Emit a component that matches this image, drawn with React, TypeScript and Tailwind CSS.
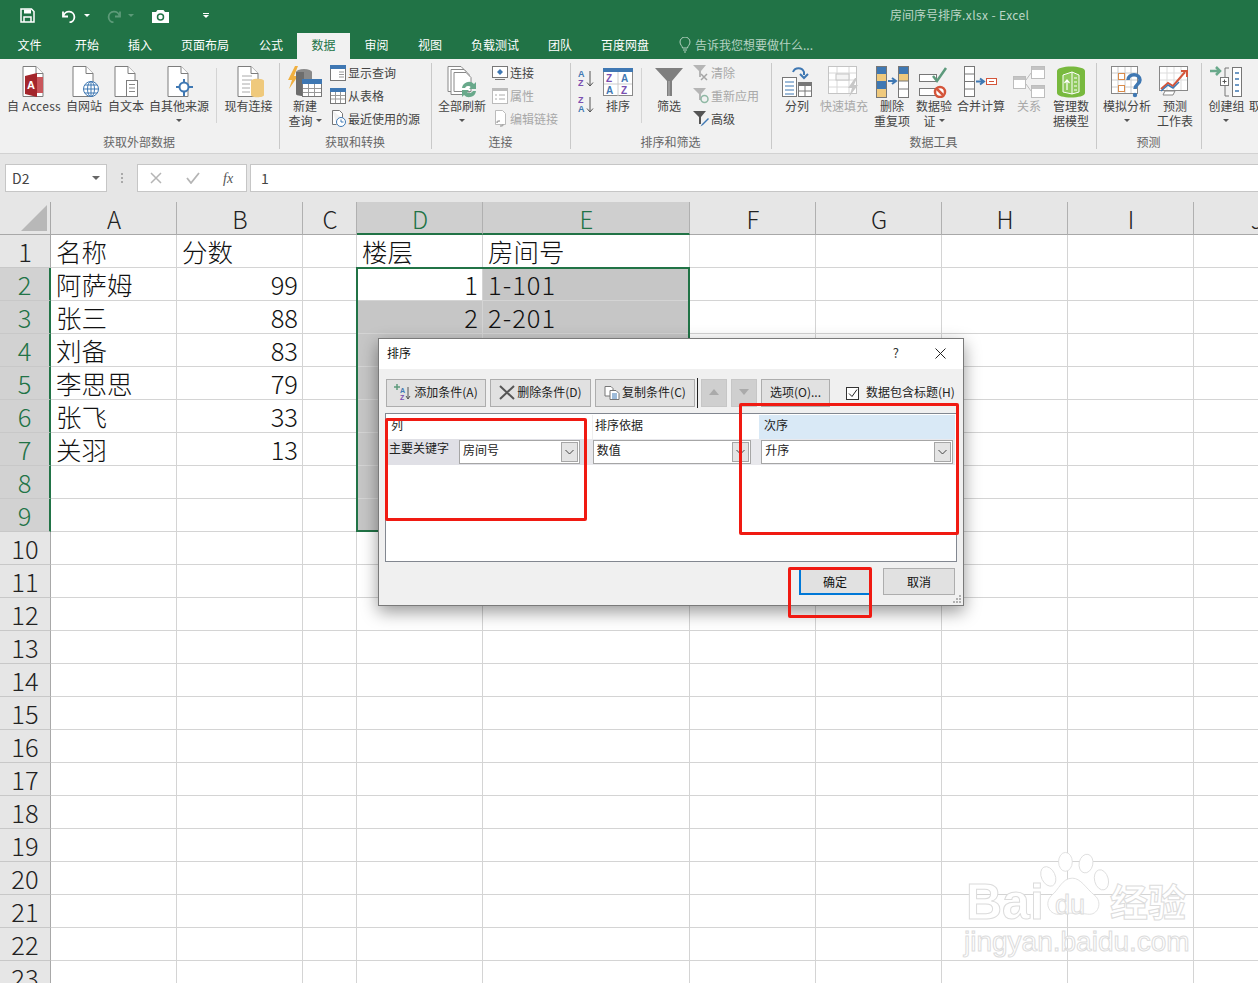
import React from "react";

const Doc = ({ children }: { children?: React.ReactNode }) => (
  <svg width="34" height="32" viewBox="0 0 34 32" fill="none">
    <path d="M6 .5h13l7 7v23H6z" fill="#fff" stroke="#7d7d7d" />
    <path d="M19 .5v7h7" fill="#fff" stroke="#7d7d7d" />
    {children}
  </svg>
);

const Ic = ({ w = 34, h = 32, children }: { w?: number; h?: number; children: React.ReactNode }) => (
  <svg width={w} height={h} viewBox={`0 0 ${w} ${h}`} fill="none">
    {children}
  </svg>
);

const Tri = () => <span className="inline-block w-0 h-0 border-x-[3px] border-x-transparent border-t-[3px] border-t-[#555]" />;

function Big({ w, icon, lines, gray, arrow }: { w: string; icon: React.ReactNode; lines: React.ReactNode[]; gray?: boolean; arrow?: boolean }) {
  return (
    <div className={`${w} shrink-0 flex flex-col items-center`}>
      <div className="h-[32px] mt-[7px] flex items-center justify-center">{icon}</div>
      <div className={`text-[12px] leading-[15px] text-center whitespace-nowrap ${gray ? "text-[#a8a8a8]" : "text-[#444]"}`}>
        {lines.map((l, i) => (
          <div key={i} className="h-[15px] flex items-center justify-center gap-[3px]">
            {l}
          </div>
        ))}
        {arrow && lines.length === 1 && (
          <div className="h-[15px] flex items-center justify-center">
            <Tri />
          </div>
        )}
      </div>
    </div>
  );
}

function Small({ icon, text, gray }: { icon: React.ReactNode; text: string; gray?: boolean }) {
  return (
    <div className="h-[23px] flex items-center gap-[2px] whitespace-nowrap">
      <div className="w-[17px] h-[18px] flex items-center justify-center">{icon}</div>
      <span className={`text-[12px] ${gray ? "text-[#a8a8a8]" : "text-[#444]"}`}>{text}</span>
    </div>
  );
}

function Group({ w, label, children }: { w: string; label: string; children: React.ReactNode }) {
  return (
    <div className={`${w} shrink-0 flex flex-col`}>
      <div className="h-[75px] flex">{children}</div>
      <div className="h-[16px] leading-[16px] text-center text-[12px] text-[#666] pr-px">{label}</div>
    </div>
  );
}

const Sep = () => <div className="w-px h-[86px] mt-[4px] bg-[#c9c9c9] shrink-0" />;
const SubSep = () => <div className="w-px h-[55px] mt-[9px] bg-[#d4d4d4] shrink-0" />;

const smallTable = (
  <svg width="16" height="16" viewBox="0 0 16 16" fill="none">
    <rect x=".5" y=".5" width="15" height="15" fill="#fff" stroke="#777" />
    <rect x="0" y="0" width="16" height="4" fill="#3f78b3" />
    <path d="M1 7.500h14M1 11h14M5.500 4v11M10.500 4v11" stroke="#999" />
  </svg>
);

function AzIcon({ flip }: { flip?: boolean }) {
  return (
    <svg width="17" height="20" viewBox="0 0 17 20" fill="none">
      <text x="0" y="8" fontSize="9" fontWeight="700" fill={flip ? "#7a4fb0" : "#3f78b3"} fontFamily="Liberation Sans, sans-serif">{flip ? "Z" : "A"}</text>
      <text x="0" y="17" fontSize="9" fontWeight="700" fill={flip ? "#3f78b3" : "#7a4fb0"} fontFamily="Liberation Sans, sans-serif">{flip ? "A" : "Z"}</text>
      <path d="M12 2v15M9 13.500l3 3.500 3-3.500" stroke="#555" />
    </svg>
  );
}

function Ribbon() {
  return (
    <div className="h-[95px] bg-[#f1f1f1] border-b border-[#d2d2d2] flex overflow-hidden">
      <Group w="w-[279px]" label="获取外部数据">
        <div className="flex pl-[5px]">
          <Big w="w-[58px]" lines={[<span className="tracking-[0.3px]">自 Access</span>]} icon={
            <Doc>
              <path d="M8 10l12-3v24l-12-3z" fill="#a4262c" />
              <path d="M20 11h6v16h-6z" fill="#c9565b" />
              <text x="10" y="23" fontSize="11" fontWeight="700" fill="#fff" fontFamily="Liberation Sans, sans-serif">A</text>
            </Doc>
          } />
          <Big w="w-[42px]" lines={["自网站"]} icon={
            <Doc>
              <circle cx="24" cy="23" r="7.500" fill="#fff" stroke="#3f78b3" />
              <path d="M16.500 23h15M24 15.500v15M18 19h12M18 27h12" stroke="#3f78b3" />
              <ellipse cx="24" cy="23" rx="3.500" ry="7.500" stroke="#3f78b3" />
            </Doc>
          } />
          <Big w="w-[42px]" lines={["自文本"]} icon={
            <Doc>
              <rect x="17.500" y="14.500" width="11" height="16" fill="#fff" stroke="#7d7d7d" />
              <path d="M20 18.500h6M20 22h6M20 25.500h6" stroke="#888" />
            </Doc>
          } />
          <Big w="w-[64px]" lines={["自其他来源"]} arrow icon={
            <Doc>
              <circle cx="22" cy="21" r="4.500" fill="#fff" stroke="#3f78b3" strokeWidth="2" />
              <path d="M22 13v4M22 25v5M14 21h4M26 21h5" stroke="#3f78b3" strokeWidth="2" />
            </Doc>
          } />
          <div className="ml-[5px]"><SubSep /></div>
          <div className="ml-[3px]">
            <Big w="w-[57px]" lines={["现有连接"]} icon={
              <Doc>
                <path d="M10 10h10M10 14h10M10 18h8M10 22h8M10 26h8" stroke="#aaa" />
                <path d="M19 15c0-3 13-3 13 0v14c0 3-13 3-13 0z" fill="#efc97c" />
              </Doc>
            } />
          </div>
        </div>
      </Group>
      <Sep />
      <Group w="w-[151px]" label="获取和转换">
        <div className="flex pl-px">
          <Big w="w-[48px]" lines={["新建", <>查询<Tri /></>]} icon={
            <Ic w={36} h={32}>
              <path d="M8 0L1 14h4l-3 9 9-13H7l4-10z" fill="#f0b040" />
              <ellipse cx="17" cy="6" rx="8" ry="3" fill="#8a8a8a" />
              <path d="M9 6v22c0 2 8 2 8 2V6z" fill="#6d6d6d" />
              <path d="M17 6h8v8h-8z" fill="#8a8a8a" />
              <rect x="15.500" y="13.500" width="19" height="17" fill="#fff" stroke="#777" />
              <rect x="15" y="13" width="20" height="5" fill="#3f78b3" />
              <path d="M16 22.500h18M16 26.500h18M21.500 18v12M27.500 18v12" stroke="#999" />
            </Ic>
          } />
          <div className="pt-[2px]">
            <Small text="显示查询" icon={
              <svg width="16" height="16" viewBox="0 0 16 16" fill="none">
                <rect x=".5" y=".5" width="15" height="15" fill="#fff" stroke="#777" />
                <rect width="16" height="4" fill="#3f78b3" />
                <path d="M9 7h5M9 9.500h5M9 12h5" stroke="#999" />
              </svg>
            } />
            <Small text="从表格" icon={smallTable} />
            <Small text="最近使用的源" icon={
              <svg width="16" height="17" viewBox="0 0 16 17" fill="none">
                <path d="M2.500.5h7l3 3v5M2.500.5v14h4" stroke="#777" fill="#fff" />
                <circle cx="11" cy="12" r="4.500" fill="#fff" stroke="#3f78b3" />
                <path d="M11 9.500V12h2.500" stroke="#3f78b3" />
              </svg>
            } />
          </div>
        </div>
      </Group>
      <Sep />
      <Group w="w-[138px]" label="连接">
        <div className="flex pl-[3px]">
          <Big w="w-[54px]" lines={["全部刷新"]} arrow icon={
            <Ic w={32} h={32}>
              <path d="M2 .5h13l5 5v20H2z" fill="#fff" stroke="#888" />
              <path d="M5 3.500h13l5 5v20H5z" fill="#fff" stroke="#888" />
              <path d="M8 6.500h12l5 5v14H8z" fill="#fff" stroke="#888" />
              <path d="M16 22a7 7 0 0 1 12-4l2-2v7h-7l2-2a4 4 0 0 0-6 1z" fill="#69a98b" />
              <path d="M30 25a7 7 0 0 1-12 4l-2 2v-7h7l-2 2a4 4 0 0 0 6-1z" fill="#69a98b" />
            </Ic>
          } />
          <div className="pt-[2px] ml-[2px]">
            <Small text="连接" icon={
              <svg width="16" height="16" viewBox="0 0 16 16" fill="none">
                <rect x=".5" y="1.500" width="15" height="11" fill="#fff" stroke="#777" />
                <path d="M8 4l3 3-3 3-3-3z" fill="#3f78b3" />
                <path d="M3 14.500h10" stroke="#777" />
              </svg>
            } />
            <Small text="属性" gray icon={
              <svg width="16" height="16" viewBox="0 0 16 16" fill="none">
                <rect x=".5" y=".5" width="15" height="15" fill="#fff" stroke="#bbb" />
                <rect width="16" height="3" fill="#bbb" />
                <path d="M3 7h2M7 7h6M3 11h2M7 11h6" stroke="#aaa" />
              </svg>
            } />
            <Small text="编辑链接" gray icon={
              <svg width="16" height="17" viewBox="0 0 16 17" fill="none">
                <path d="M3.500.5h7l3 3v11h-10z" fill="#fff" stroke="#bbb" />
                <path d="M5 13a2 2 0 0 1 2-2h1M11 14a2 2 0 0 1-2 2H8" stroke="#aaa" strokeWidth="1.500" />
              </svg>
            } />
          </div>
        </div>
      </Group>
      <Sep />
      <Group w="w-[200px]" label="排序和筛选">
        <div className="flex pl-[7px]">
          <div className="w-[18px] pt-[10px] flex flex-col gap-[6px]">
            <AzIcon />
            <AzIcon flip />
          </div>
          <Big w="w-[44px]" lines={["排序"]} icon={
            <Ic w={30} h={28}>
              <rect x=".5" y=".5" width="29" height="27" fill="#fff" stroke="#888" />
              <rect width="30" height="4" fill="#3f78b3" />
              <path d="M15 4v24M1 16h28" stroke="#ccc" />
              <text x="3" y="14" fontSize="10" fontWeight="700" fill="#7a4fb0" fontFamily="Liberation Sans, sans-serif">Z</text>
              <text x="18" y="14" fontSize="10" fontWeight="700" fill="#3f78b3" fontFamily="Liberation Sans, sans-serif">A</text>
              <text x="3" y="26" fontSize="10" fontWeight="700" fill="#3f78b3" fontFamily="Liberation Sans, sans-serif">A</text>
              <text x="18" y="26" fontSize="10" fontWeight="700" fill="#7a4fb0" fontFamily="Liberation Sans, sans-serif">Z</text>
            </Ic>
          } />
          <div className="ml-[1px]"><SubSep /></div>
          <div className="ml-[4px]">
            <Big w="w-[46px]" lines={["筛选"]} icon={
              <Ic w={30} h={30}>
                <path d="M1 1h28L18 14v15h-5V14z" fill="#7f7f7f" />
                <path d="M15 14v15" stroke="#b8b8b8" />
              </Ic>
            } />
          </div>
          <div className="pt-[2px]">
            <Small text="清除" gray icon={
              <svg width="16" height="17" viewBox="0 0 16 17" fill="none">
                <path d="M0 1h13L8 7v6H6V7z" fill="#b5b5b5" />
                <path d="M8 10l6 6M14 10l-6 6" stroke="#a5a5a5" strokeWidth="1.500" />
              </svg>
            } />
            <Small text="重新应用" gray icon={
              <svg width="16" height="17" viewBox="0 0 16 17" fill="none">
                <path d="M0 1h13L8 7v6H6V7z" fill="#b5b5b5" />
                <circle cx="11.500" cy="12" r="3.500" stroke="#8fb8a4" strokeWidth="1.500" />
              </svg>
            } />
            <Small text="高级" icon={
              <svg width="16" height="17" viewBox="0 0 16 17" fill="none">
                <path d="M0 1h13L8 7v7H6V7z" fill="#555" />
                <path d="M15 8l-6 6-1.500 2.500L10 15l6-6z" fill="#3f78b3" />
              </svg>
            } />
          </div>
        </div>
      </Group>
      <Sep />
      <Group w="w-[324px]" label="数据工具">
        <div className="flex pl-[3px]">
          <Big w="w-[44px]" lines={["分列"]} icon={
            <Ic w={30} h={32}>
              <path d="M11 6c2-5 9-5 11 0v3" stroke="#3f78b3" strokeWidth="2" />
              <path d="M18 8l4 4 4-4" stroke="#3f78b3" strokeWidth="2" />
              <rect x=".5" y="11.500" width="14" height="19" fill="#fff" stroke="#777" />
              <path d="M3 16h9M3 20h9M3 24h9M3 28h9" stroke="#3f78b3" />
              <rect x="16.500" y="16.500" width="13" height="14" fill="#fff" stroke="#777" />
              <rect x="16" y="16" width="14" height="4" fill="#777" />
              <path d="M23 20v10M17 25h12" stroke="#777" />
            </Ic>
          } />
          <Big w="w-[50px]" lines={["快速填充"]} gray icon={
            <Ic w={32} h={32}>
              <rect x=".5" y=".5" width="28" height="27" fill="#fff" stroke="#c4c4c4" />
              <path d="M1 7h27M1 14h27M1 21h27M9 1v26M21 1v26" stroke="#d8d8d8" />
              <rect x="8" y="8" width="13" height="6" fill="#f4f4f4" stroke="#c4c4c4" />
              <path d="M27 12l-7 10h4l-3 9 9-12h-4l3-7z" fill="#c8c8c8" />
            </Ic>
          } />
          <Big w="w-[46px]" lines={["删除", "重复项"]} icon={
            <Ic w={33} h={32}>
              <rect x=".5" y=".5" width="10" height="31" fill="#fff" stroke="#777" />
              <rect x="1" y="1" width="9" height="7" fill="#3f78b3" />
              <rect x="1" y="8" width="9" height="7" fill="#efc97c" />
              <rect x="1" y="15" width="9" height="8" fill="#3f78b3" />
              <rect x="1" y="23" width="9" height="8" fill="#efc97c" />
              <rect x="22.500" y=".5" width="10" height="31" fill="#fff" stroke="#777" />
              <rect x="23" y="1" width="9" height="7" fill="#3f78b3" />
              <rect x="23" y="8" width="9" height="7" fill="#efc97c" />
              <path d="M23 15h9M23 23h9" stroke="#777" />
              <path d="M12 15h7M16 12l4 3-4 3" stroke="#3f78b3" strokeWidth="2" />
            </Ic>
          } />
          <Big w="w-[38px]" lines={["数据验", <>证<Tri /></>]} icon={
            <Ic w={30} h={32}>
              <rect x=".5" y="8.500" width="17" height="7" fill="#fff" stroke="#777" />
              <rect x=".5" y="22.500" width="17" height="7" fill="#fff" stroke="#777" />
              <path d="M14 10l4 5 9-13" stroke="#5d9a7c" strokeWidth="2.500" />
              <circle cx="21" cy="26" r="5" fill="#fff" stroke="#d4553a" strokeWidth="2.500" />
              <path d="M18 23l6 6" stroke="#d4553a" strokeWidth="2.500" />
            </Ic>
          } />
          <Big w="w-[56px]" lines={["合并计算"]} icon={
            <Ic w={34} h={32}>
              <rect x=".5" y=".5" width="10" height="30" fill="#fff" stroke="#777" />
              <path d="M1 8h9M1 15.500h9M1 23h9" stroke="#777" />
              <path d="M12 15.500h7M16 12.500l4 3-4 3" stroke="#3f78b3" strokeWidth="2" />
              <rect x="22.500" y="12.500" width="10" height="6" fill="#fff" stroke="#d4553a" />
              <path d="M25 15.500h5" stroke="#d4553a" />
            </Ic>
          } />
          <Big w="w-[40px]" lines={["关系"]} gray icon={
            <Ic w={32} h={32}>
              <rect x=".5" y="10.500" width="12" height="12" fill="#fff" stroke="#bdbdbd" />
              <rect x="1" y="11" width="11" height="3" fill="#c4c4c4" />
              <rect x="18.500" y=".5" width="13" height="12" fill="#fff" stroke="#bdbdbd" />
              <rect x="19" y="1" width="12" height="3" fill="#c4c4c4" />
              <rect x="18.500" y="19.500" width="13" height="12" fill="#fff" stroke="#bdbdbd" />
              <rect x="19" y="20" width="12" height="3" fill="#c4c4c4" />
              <path d="M13 14l5-7M13 18l5 7" stroke="#bdbdbd" />
            </Ic>
          } />
          <Big w="w-[44px]" lines={["管理数", "据模型"]} icon={
            <Ic w={30} h={32}>
              <path d="M1 5c0-6 28-6 28 0v22c0 6-28 6-28 0z" fill="#78b93e" />
              <path d="M7 9l9-3 7 3v17l-7 2-9-2z" fill="#8fc95c" stroke="#fff" />
              <path d="M16 6v22" stroke="#fff" />
              <path d="M11 24V14M8.500 17l2.500-3 2.500 3" stroke="#fff" strokeWidth="1.200" />
              <path d="M18 12h3M18 16h3M18 20h3M18 24h3" stroke="#fff" />
            </Ic>
          } />
        </div>
      </Group>
      <Sep />
      <Group w="w-[104px]" label="预测">
        <div className="flex pl-[6px]">
          <Big w="w-[48px]" lines={["模拟分析"]} arrow icon={
            <Ic w={32} h={32}>
              <rect x=".5" y=".5" width="26" height="27" fill="#fff" stroke="#888" />
              <path d="M1 7h25M1 14h25M1 21h25M7 1v26M14 1v26M20 1v26" stroke="#ccc" />
              <rect x="7.500" y="7.500" width="6" height="6" fill="#fff" stroke="#d98b4a" />
              <rect x="7.500" y="19.500" width="6" height="6" fill="#fff" stroke="#d98b4a" />
              <path d="M17 14c0-7 12-7 12 0 0 4-5 4-5 9" stroke="#3f78b3" strokeWidth="3.500" />
              <circle cx="24" cy="29" r="2.200" fill="#3f78b3" />
            </Ic>
          } />
          <Big w="w-[48px]" lines={["预测", "工作表"]} icon={
            <Ic w={32} h={32}>
              <rect x=".5" y=".5" width="28" height="24" fill="#fff" stroke="#888" />
              <path d="M1 7h27M1 14h27M8 1v23M15 1v23M22 1v23" stroke="#ddd" />
              <path d="M2 23l7-6 5 3 12-14" stroke="#d4553a" strokeWidth="2" />
              <path d="M22 5h6v6" stroke="#d4553a" strokeWidth="2" />
              <path d="M2 25l7-6 5 3 6-6" stroke="#3f78b3" strokeWidth="1.500" />
              <path d="M6 25h10l-2 4H4z" fill="#fff" stroke="#888" />
            </Ic>
          } />
        </div>
      </Group>
      <Sep />
      <Group w="w-[56px]" label="">
        <div className="flex pl-[4px]">
          <Big w="w-[41px]" lines={["创建组"]} arrow icon={
            <Ic w={34} h={32}>
              <path d="M0 5h9M6 1l4 4-4 4" stroke="#69a98b" strokeWidth="2.500" />
              <rect x="22.500" y="1.500" width="9" height="29" fill="#fff" stroke="#777" />
              <path d="M25 7h4M25 13h4M25 19h4M25 25h4" stroke="#3f78b3" strokeWidth="1.500" />
              <path d="M19 2h-4v28h4" stroke="#777" />
              <rect x="10.500" y="11.500" width="8" height="8" fill="#fff" stroke="#777" />
              <path d="M12.500 15.500h4M14.500 13.500v4" stroke="#555" />
            </Ic>
          } />
          <div className="ml-[2px] mt-[39px] text-[12px] leading-[15px] h-[15px] text-[#444] whitespace-nowrap">取消组合</div>
        </div>
      </Group>
    </div>
  );
}

function TitleBar() {
  return (
    <div className="h-[33px] bg-[#217346] flex items-center relative pb-[2px]">
      <div className="flex items-center w-[640px]">
        <svg className="ml-[20px]" width="15" height="15" viewBox="0 0 15 15" fill="none">
          <path d="M1 1h10.500L14 3.500V14H1z" stroke="#fff" strokeWidth="1.500" />
          <path d="M4 1.500h7v4H4z" fill="#fff" />
          <path d="M4 14V9h7v5" stroke="#fff" strokeWidth="1.500" />
        </svg>
        <svg className="ml-[27px]" width="15" height="15" viewBox="0 0 15 15" fill="none">
          <path d="M1 3.500v5h5" stroke="#fff" strokeWidth="1.800" />
          <path d="M1.500 8a5.500 5.500 0 1 1 6 6.500" stroke="#fff" strokeWidth="1.800" />
        </svg>
        <span className="ml-[7px] w-0 h-0 border-x-[3px] border-x-transparent border-t-[3px] border-t-white" />
        <svg className="ml-[16px]" width="15" height="15" viewBox="0 0 15 15" fill="none">
          <path d="M14 3.500v5H9" stroke="#5c9a78" strokeWidth="1.800" />
          <path d="M13.500 8a5.500 5.500 0 1 0-6 6.500" stroke="#5c9a78" strokeWidth="1.800" />
        </svg>
        <span className="ml-[7px] w-0 h-0 border-x-[3px] border-x-transparent border-t-[3px] border-t-[#5c9a78]" />
        <svg className="ml-[18px]" width="17" height="14" viewBox="0 0 17 14" fill="none">
          <path d="M0 3h4l1.500-2h6L13 3h4v11H0z" fill="#fff" />
          <circle cx="8.500" cy="8" r="3" stroke="#217346" strokeWidth="1.500" />
        </svg>
        <div className="ml-[34px] flex flex-col items-center gap-[1px]">
          <span className="w-[6px] h-px bg-white" />
          <span className="w-0 h-0 border-x-[3px] border-x-transparent border-t-[3px] border-t-white" />
        </div>
      </div>
      <div className="absolute left-[890px] top-[7px] text-[12px] leading-[16px] text-[#bcd6c7] whitespace-nowrap">
        房间序号排序<span className="tracking-[0.4px]">.xlsx - Excel</span>
      </div>
    </div>
  );
}

const tabs: [string, string][] = [
  ["文件", "w-[59px]"],
  ["开始", "w-[56px]"],
  ["插入", "w-[50px]"],
  ["页面布局", "w-[80px]"],
  ["公式", "w-[52px]"],
  ["数据", "w-[53px]"],
  ["审阅", "w-[53px]"],
  ["视图", "w-[54px]"],
  ["负载测试", "w-[76px]"],
  ["团队", "w-[54px]"],
  ["百度网盘", "w-[76px]"],
];

function TabBar() {
  return (
    <div className="h-[26px] bg-[#217346] flex text-[12px] text-white">
      {tabs.map(([t, w]) => (
        <div key={t} className={`${w} h-[26px] flex items-center justify-center pb-[2px] ${t === "数据" ? "bg-[#f1f1f1] text-[#217346]" : ""}`}>
          {t}
        </div>
      ))}
      <div className="ml-[16px] flex items-center gap-[4px] pb-[2px] text-[#b5d2c2]">
        <svg width="12" height="16" viewBox="0 0 12 16" fill="none">
          <path d="M3.500 11c0-2-2.500-3-2.500-6a5 5 0 0 1 10 0c0 3-2.500 4-2.500 6z" stroke="#b5d2c2" />
          <path d="M4 13h4M5 15h2" stroke="#b5d2c2" />
        </svg>
        告诉我您想要做什么...
      </div>
    </div>
  );
}

function FormulaBar() {
  return (
    <div className="h-[48px] bg-[#e6e6e6] pt-[10px] flex">
      <div className="ml-[5px] w-[102px] h-[28px] bg-white border border-[#c6c6c6] flex items-center justify-between px-[6px] text-[14px] text-[#444]">
        <span>D2</span>
        <span className="w-0 h-0 border-x-[4px] border-x-transparent border-t-[4px] border-t-[#666]" />
      </div>
      <div className="w-[30px] h-[28px] flex flex-col items-center justify-center gap-[2px]">
        <span className="w-[2px] h-[2px] bg-[#aaa]" />
        <span className="w-[2px] h-[2px] bg-[#aaa]" />
        <span className="w-[2px] h-[2px] bg-[#aaa]" />
      </div>
      <div className="w-[110px] h-[28px] bg-white border border-[#c6c6c6] flex items-center pl-[12px]">
        <svg width="12" height="12" viewBox="0 0 12 12"><path d="M1 1l10 10M11 1L1 11" stroke="#b5b5b5" strokeWidth="1.500" /></svg>
        <svg className="ml-[24px]" width="14" height="12" viewBox="0 0 14 12" fill="none"><path d="M1 6l4 5 8-10" stroke="#b5b5b5" strokeWidth="1.800" /></svg>
        <span className="ml-[23px] text-[14px] italic text-[#555] [font-family:'Liberation_Serif',serif]">fx</span>
      </div>
      <div className="ml-[3px] flex-1 h-[28px] bg-white border-y border-l border-[#c6c6c6] flex items-center pl-[10px] text-[14px] text-[#444]">1</div>
    </div>
  );
}

const cols = ["A", "B", "C", "D", "E", "F", "G", "H", "I", "J"];
const colW = ["w-[126px]", "w-[126px]", "w-[54px]", "w-[126px]", "w-[207px]", "w-[126px]", "w-[126px]", "w-[126px]", "w-[126px]", "w-[126px]"];

const data: Record<string, [string, boolean?]> = {
  A1: ["名称"], B1: ["分数"], D1: ["楼层"], E1: ["房间号"],
  A2: ["阿萨姆"], B2: ["99", true], D2: ["1", true], E2: ["1-101"],
  A3: ["张三"], B3: ["88", true], D3: ["2", true], E3: ["2-201"],
  A4: ["刘备"], B4: ["83", true],
  A5: ["李思思"], B5: ["79", true],
  A6: ["张飞"], B6: ["33", true],
  A7: ["关羽"], B7: ["13", true],
};

function Sheet() {
  const rows = Array.from({ length: 23 }, (_, i) => i + 1);
  return (
    <div className="relative flex-1 overflow-hidden bg-white">
      <div className="flex h-[33px] text-[24px] leading-[30px] font-light">
        <div className="w-[51px] shrink-0 bg-[#e6e6e6] border-r border-b border-[#a8a8a8] relative">
          <div className="absolute right-[3px] bottom-[3px] w-0 h-0 border-l-[26px] border-l-transparent border-b-[26px] border-b-[#b8b8b8]" />
        </div>
        {cols.map((c, i) => {
          const sel = c === "D" || c === "E";
          return (
            <div key={c} className={`${colW[i]} shrink-0 flex items-center justify-center pt-[2px] pl-px border-r border-[#b0b0b0] ${sel ? "bg-[#cfcfcf] text-[#217346] border-b-2 border-b-[#217346]" : "bg-[#e6e6e6] text-[#222] border-b border-b-[#a8a8a8]"}`}>
              {c}
            </div>
          );
        })}
      </div>
      {rows.map((r) => {
        const selRow = r >= 2 && r <= 9;
        return (
          <div key={r} className="flex h-[33px] text-[25.5px] leading-[30px] font-light text-[#111]">
            <div className={`w-[51px] shrink-0 flex items-center justify-center border-b border-[#c8c8c8] ${selRow ? "bg-[#d2d2d2] text-[#217346] border-r-2 border-r-[#217346]" : "bg-[#e6e6e6] text-[#222] border-r border-r-[#a8a8a8]"}`}>
              {r}
            </div>
            {cols.map((c, i) => {
              const d = data[`${c}${r}`];
              const inSel = selRow && (c === "D" || c === "E") && !(c === "D" && r === 2);
              return (
                <div key={c} className={`${colW[i]} shrink-0 flex items-center pl-[5px] pr-[4px] whitespace-nowrap border-r border-b border-[#d4d4d4] ${d?.[1] ? "justify-end" : ""} ${c === "E" && r > 1 ? "tracking-[1px]" : ""} ${inSel ? "bg-[#c6c6c6] border-[#b8b8b8]" : ""}`}>
                  {d?.[0]}
                </div>
              );
            })}
          </div>
        );
      })}
      {/* selection outline */}
      <div className="absolute left-[356px] top-[65px] w-[334px] h-[265px] border-2 border-[#217346] pointer-events-none" />
      <Watermark />
      <SortDialog />
    </div>
  );
}

function Watermark() {
  const outline = "text-white [-webkit-text-stroke:1px_#dcdcdc] [font-family:'Liberation_Sans',sans-serif]";
  return (
    <div className="absolute left-[964px] top-[646px] w-[226px] h-[112px] pointer-events-none">
      <svg className="absolute left-[74px] top-0" width="72" height="74" viewBox="0 0 84 76" fill="#fff" stroke="#dcdcdc">
        <ellipse cx="12" cy="28" rx="8" ry="12" transform="rotate(-25 12 28)" />
        <ellipse cx="32" cy="11" rx="8" ry="11" />
        <ellipse cx="56" cy="13" rx="8" ry="11" transform="rotate(12 56 13)" />
        <ellipse cx="74" cy="32" rx="8" ry="12" transform="rotate(-15 74 32)" />
        <path d="M40 30c10 0 16 12 26 20 10 8 4 24-8 22-8-1-24-2-32 0C14 74 6 60 16 50c8-6 12-20 24-20z" />
      </svg>
      <span className={`absolute left-[2px] top-[26px] text-[50px] leading-[56px] font-bold ${outline}`}>Bai</span>
      <span className={`absolute left-[91px] top-[42px] text-[27px] leading-[30px] ${outline}`}>du</span>
      <span className="absolute left-[146px] top-[28px] text-[38px] leading-[48px] font-bold whitespace-nowrap [-webkit-text-stroke:1px_#dcdcdc] text-white">经验</span>
      <span className={`absolute left-0 top-[78px] text-[28px] leading-[32px] whitespace-nowrap ${outline}`}>jingyan.baidu.com</span>
    </div>
  );
}

function DlgBtn({ w, children, disabled }: { w: string; children: React.ReactNode; disabled?: boolean }) {
  return (
    <div className={`${w} h-[28px] shrink-0 border flex items-center justify-center gap-[2px] pb-[2px] text-[12px] text-[#222] whitespace-nowrap ${disabled ? "bg-[#cfcfcf] border-[#c6c6c6]" : "bg-[#e1e1e1] border-[#adadad]"}`}>
      {children}
    </div>
  );
}

function Combo({ w, text }: { w: string; text: string }) {
  return (
    <div className={`${w} h-[24px] shrink-0 bg-white border border-[#a6a6a6] flex items-center justify-between text-[12px] text-[#222] pl-[3px] pr-px`}>
      <span className="pb-[4px]">{text}</span>
      <span className="w-[17px] h-[20px] bg-[#e4e4e4] border border-[#a6a6a6] flex items-center justify-center">
        <svg width="9" height="6" viewBox="0 0 9 6" fill="none"><path d="M.5 1l4 4 4-4" stroke="#444" /></svg>
      </span>
    </div>
  );
}

function SortDialog() {
  return (
    <>
      <div className="absolute left-[378px] top-[136px] w-[586px] h-[268px] bg-[#f0f0f0] border border-[#7a7a7a] shadow-[0_6px_16px_rgba(0,0,0,0.4)] flex flex-col text-[12px]">
        <div className="h-[30px] bg-white flex items-center pl-[8px] pb-[2px] text-[#111] shrink-0">
          排序
          <span className="ml-auto mr-[36px] text-[13px] text-[#333]">?</span>
          <svg className="mr-[17px]" width="11" height="11" viewBox="0 0 11 11"><path d="M.5.5l10 10M10.500.5l-10 10" stroke="#222" /></svg>
        </div>
        <div className="flex items-center pl-[7px] mt-[10px] h-[28px]">
          <DlgBtn w="w-[100px]">
            <svg width="18" height="17" viewBox="0 0 18 17" fill="none">
              <path d="M3 0v6M0 3h6" stroke="#5d9a7c" strokeWidth="1.500" />
              <path d="M14 3v12M12 12l2 3 2-3" stroke="#555" />
              <text x="6" y="9" fontSize="7" fontWeight="700" fill="#3f78b3" fontFamily="Liberation Sans, sans-serif">A</text>
              <text x="6" y="16" fontSize="7" fontWeight="700" fill="#7a4fb0" fontFamily="Liberation Sans, sans-serif">Z</text>
            </svg>
            添加条件(A)
          </DlgBtn>
          <div className="ml-[4px]">
            <DlgBtn w="w-[101px]">
              <svg width="16" height="15" viewBox="0 0 16 15"><path d="M1 1l14 13M15 1L1 14" stroke="#555" strokeWidth="2" /></svg>
              删除条件(D)
            </DlgBtn>
          </div>
          <div className="ml-[4px]">
            <DlgBtn w="w-[100px]">
              <svg width="16" height="15" viewBox="0 0 16 15" fill="none">
                <path d="M1 1.500h6l2 2V11H1z" fill="#fff" stroke="#777" />
                <path d="M6 5.500h6l3 3v6H6z" fill="#fff" stroke="#777" />
                <path d="M8 9h5M8 11h5M8 13h5" stroke="#3f78b3" />
              </svg>
              复制条件(C)
            </DlgBtn>
          </div>
          <div className="w-px h-[30px] bg-[#222] ml-[2px] mr-[3px]" />
          <DlgBtn w="w-[26px]" disabled><span className="w-0 h-0 border-x-[5px] border-x-transparent border-b-[6px] border-b-[#aaa]" /></DlgBtn>
          <div className="ml-[4px]">
            <DlgBtn w="w-[26px]" disabled><span className="w-0 h-0 border-x-[5px] border-x-transparent border-t-[6px] border-t-[#aaa]" /></DlgBtn>
          </div>
          <div className="ml-[4px]">
            <DlgBtn w="w-[69px]">选项(O)...</DlgBtn>
          </div>
          <div className="ml-[16px] w-[13px] h-[13px] bg-white border border-[#333] flex items-center justify-center">
            <svg width="10" height="9" viewBox="0 0 10 9" fill="none"><path d="M1 4.500l3 3 5-7" stroke="#222" /></svg>
          </div>
          <span className="ml-[7px] pb-[2px] text-[#222] whitespace-nowrap">数据包含标题(H)</span>
        </div>
        <div className="ml-[6px] mt-[6px] w-[572px] h-[149px] bg-white border border-[#828790] p-px text-[#222]">
          <div className="flex h-[24px]">
            <div className="w-[205px] flex items-center pl-[4px] pb-[4px]">列</div>
            <div className="w-[167px] flex items-center pl-[2px] pb-[4px] border-l border-[#eee]">排序依据</div>
            <div className="w-[196px] flex items-center pl-[5px] pb-[4px] bg-[#d9e9f6]">次序</div>
          </div>
          <div className="flex h-[26px]">
            <div className="w-[200px] bg-[#e0e0e6] flex pl-[1px] pt-[1px]">
              <span className="w-[71px] pl-px leading-[16px] whitespace-nowrap">主要关键字</span>
              <Combo w="w-[121px]" text="房间号" />
            </div>
            <div className="w-[173px] pl-[6px] pt-[1px] bg-[#e8e8ec]">
              <Combo w="w-[158px]" text="数值" />
            </div>
            <div className="w-[196px] bg-[#e8e8ec] pl-[2px] pt-[1px]">
              <Combo w="w-[192px]" text="升序" />
            </div>
          </div>
        </div>
        <div className="flex mt-[6px]">
          <div className="ml-[420px] w-[72px] h-[27px] bg-[#e1e1e1] border-2 border-[#0078d7] flex items-center justify-center text-[#111]">确定</div>
          <div className="ml-[12px] w-[72px] h-[27px] bg-[#e1e1e1] border border-[#adadad] flex items-center justify-center text-[#111]">取消</div>
        </div>
        <svg className="absolute right-[1px] bottom-[1px]" width="9" height="9" viewBox="0 0 9 9" fill="#b0b0b0">
          <rect x="6" y="0" width="2" height="2" /><rect x="3" y="3" width="2" height="2" /><rect x="6" y="3" width="2" height="2" />
          <rect x="0" y="6" width="2" height="2" /><rect x="3" y="6" width="2" height="2" /><rect x="6" y="6" width="2" height="2" />
        </svg>
      </div>
      {/* red annotation boxes */}
      <div className="absolute left-[385px] top-[216px] w-[202px] h-[103px] border-[3px] border-[#f01a12] rounded-[2px]" />
      <div className="absolute left-[739px] top-[201px] w-[220px] h-[132px] border-[3px] border-[#f01a12] rounded-[2px]" />
      <div className="absolute left-[788px] top-[365px] w-[84px] h-[51px] border-[3px] border-[#f01a12] rounded-[2px]" />
    </>
  );
}

export default function App() {
  return (
    <div className="w-[1258px] h-[983px] flex flex-col overflow-hidden bg-white [font-family:'Noto_Sans_CJK_SC',sans-serif]">
      <TitleBar />
      <TabBar />
      <Ribbon />
      <FormulaBar />
      <Sheet />
    </div>
  );
}
